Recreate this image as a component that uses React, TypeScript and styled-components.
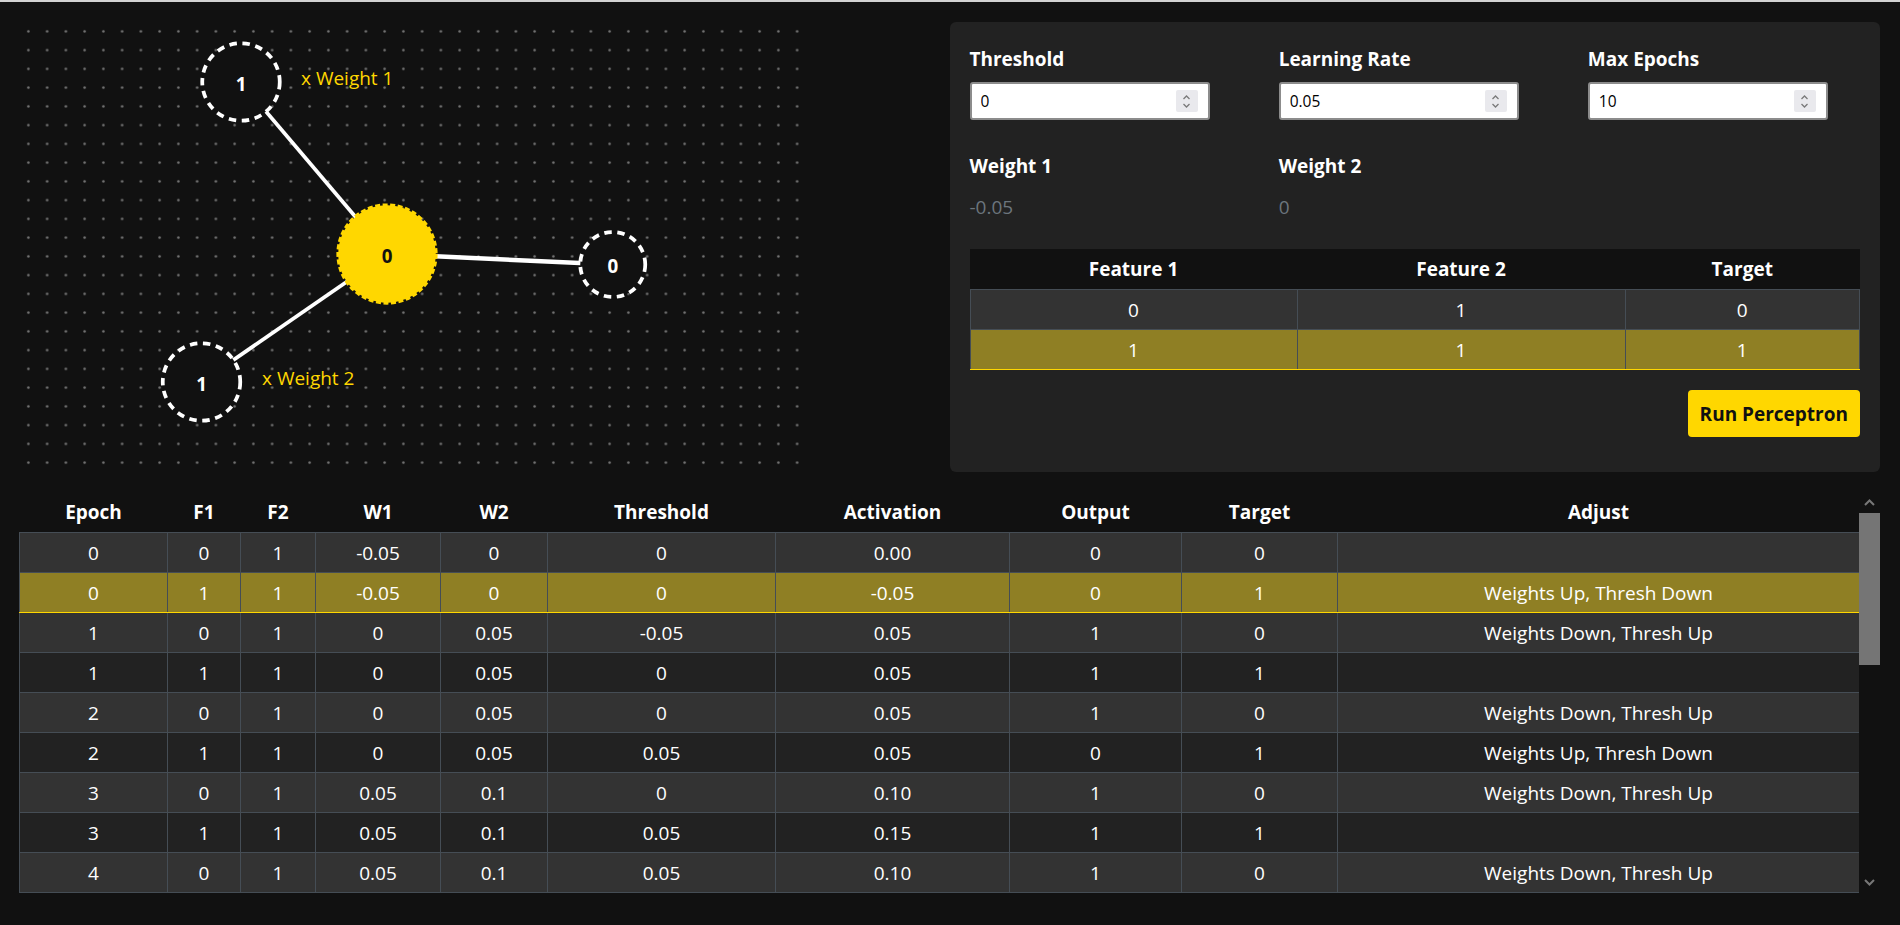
import React from "react";
import styled, { createGlobalStyle } from "styled-components";

const GlobalStyle = createGlobalStyle`
  html, body {
    margin: 0;
    padding: 0;
    background: #111;
  }
  body {
    border-top: 2px solid #d3d3d3;
    font-family: "Open Sans", "Noto Sans", sans-serif;
    color: #fff;
  }
`;

const Page = styled.div`
  padding: 20px 20px 0 19px;
`;

const TopSection = styled.section`
  display: grid;
  grid-template-columns: 1fr 1fr;
  height: 450px;
`;

const Canvas = styled.svg`
  display: block;
`;

const Panel = styled.div`
  background: #222;
  border-radius: 6px;
  padding: 24px 20px;
`;

const FieldGrid = styled.div`
  display: grid;
  grid-template-columns: repeat(3, 1fr);
  column-gap: 37px;
  row-gap: 33px;
`;

const Field = styled.div`
  display: flex;
  flex-direction: column;
`;

const Label = styled.label`
  font-weight: 700;
  font-size: 19px;
  line-height: 26px;
  margin-bottom: 10px;
`;

const InputBox = styled.div`
  width: 240px;
  height: 38px;
  box-sizing: border-box;
  border: 2px solid #8c8c8c;
  border-radius: 3px;
  background: #fff;
  display: flex;
  align-items: center;
  padding: 0 10px 0 9px;
`;

const NumberInput = styled.input`
  flex: 1;
  min-width: 0;
  border: none;
  outline: none;
  background: transparent;
  padding: 0;
  font-family: "Open Sans", sans-serif;
  font-size: 15.5px;
  color: #000;
`;

const Spinner = styled.span`
  width: 22px;
  height: 22px;
  background: #e9e9ed;
  border-radius: 2px;
  display: flex;
  align-items: center;
  justify-content: center;
`;

const Value = styled.div`
  color: #6c757d;
  font-size: 19px;
  line-height: 26px;
  margin-top: 5px;
`;

const DataTable = styled.table<{ $top?: number }>`
  width: 100%;
  border-collapse: collapse;
  table-layout: fixed;
  margin-top: ${(p) => p.$top ?? 0}px;

  th {
    background: #111;
    height: 40px;
    padding: 0;
    font-size: 19px;
    font-weight: 700;
    text-align: center;
  }

  td {
    height: 39px;
    padding: 0;
    border: 1px solid #454d55;
    font-size: 19px;
    text-align: center;
  }
`;

const Row = styled.tr<{ $striped: boolean; $active: boolean }>`
  background: ${(p) => (p.$active ? "#8f7f24" : p.$striped ? "#333" : "#222")};
  td {
    border-bottom-color: ${(p) => (p.$active ? "#ffd700" : "#454d55")};
  }
`;

const ButtonRow = styled.div`
  display: flex;
  justify-content: flex-end;
  margin-top: 20px;
`;

const RunButton = styled.button`
  height: 47px;
  padding: 0 12px;
  border: none;
  border-radius: 4px;
  background: #ffd700;
  color: #111;
  font-family: "Open Sans", sans-serif;
  font-size: 19px;
  font-weight: 700;
  cursor: pointer;
`;

const TableArea = styled.div`
  display: flex;
  margin-top: 20px;
  height: 401px;
`;

const TableScroll = styled.div`
  flex: 1;
  overflow-y: auto;
  scrollbar-width: none;
  &::-webkit-scrollbar {
    display: none;
  }
`;

const ScrollTrack = styled.div`
  width: 21px;
  display: flex;
  flex-direction: column;
  background: #111;
`;

const ScrollArrow = styled.div<{ $end?: boolean }>`
  height: 21px;
  display: flex;
  align-items: center;
  justify-content: center;
  margin-top: ${(p) => (p.$end ? "auto" : "0")};
`;

const ScrollThumb = styled.div`
  background: #757575;
`;

interface IStep {
  epoch: number;
  f1: number;
  f2: number;
  w1: number;
  w2: number;
  th: number;
  act: number;
  out: number;
  target: number;
  adjust: string;
}

const dataset = [
  { f1: 0, f2: 1, target: 0 },
  { f1: 1, f2: 1, target: 1 },
];

const fmt = (v: number) => {
  const r = Math.round(v * 100) / 100;
  return Object.is(r, -0) ? "0" : String(r);
};

function simulate(): IStep[] {
  const lr = 0.05;
  let w1 = -0.05;
  let w2 = 0;
  let th = 0;
  const steps: IStep[] = [];
  for (let epoch = 0; epoch <= 10; epoch++) {
    for (const d of dataset) {
      const act = d.f1 * w1 + d.f2 * w2;
      const out = act > th ? 1 : 0;
      let adjust = "";
      const step = { epoch, ...d, w1, w2, th, act, out };
      if (out < d.target) {
        adjust = "Weights Up, Thresh Down";
        w1 += lr * d.f1;
        w2 += lr * d.f1;
        th -= lr;
      } else if (out > d.target) {
        adjust = "Weights Down, Thresh Up";
        w1 -= lr * d.f1;
        w2 -= lr * d.f1;
        th += lr;
      }
      steps.push({ ...step, adjust });
    }
  }
  return steps;
}

const steps = simulate();
const current = 1;

const nodes = {
  in1: { x: 177.6, y: 48, r: 31 },
  in2: { x: 146, y: 288, r: 31 },
  sum: { x: 294.4, y: 185.6, r: 39 },
  out: { x: 475, y: 194, r: 26 },
};

function SpinIcon() {
  return (
    <svg width="9" height="15" viewBox="0 0 9 15">
      <polyline points="1.5,5 4.5,2 7.5,5" fill="none" stroke="#7a7a7a" strokeWidth="1.3" />
      <polyline points="1.5,10 4.5,13 7.5,10" fill="none" stroke="#7a7a7a" strokeWidth="1.3" />
    </svg>
  );
}

function Chevron({ down }: { down?: boolean }) {
  return (
    <svg width="11" height="7" viewBox="0 0 11 7">
      <polyline
        points={down ? "1,1 5.5,5.5 10,1" : "1,6 5.5,1.5 10,6"}
        fill="none"
        stroke="#777"
        strokeWidth="2"
      />
    </svg>
  );
}

function Network() {
  const s = steps[current];
  const line = (a: { x: number; y: number }, b: { x: number; y: number }, w = 3) => (
    <line x1={a.x} y1={a.y} x2={b.x} y2={b.y} stroke="#fff" strokeWidth={w} />
  );
  const inputNode = (n: { x: number; y: number; r: number }, v: number) => (
    <g>
      <circle cx={n.x} cy={n.y} r={n.r} fill="#111" stroke="#fff" strokeWidth="3" strokeDasharray="6 4.5" />
      <text x={n.x} y={n.y + 1} textAnchor="middle" dominantBaseline="central" fill="#fff" fontSize="15" fontWeight="700">
        {v}
      </text>
    </g>
  );
  return (
    <Canvas width={787.5} height={450} viewBox="0 0 630 360">
      <defs>
        <pattern id="dots" width="15" height="15" patternUnits="userSpaceOnUse">
          <circle cx="7.5" cy="7.5" r="1" fill="#777" />
        </pattern>
      </defs>
      <rect width="630" height="360" fill="url(#dots)" />
      {line(nodes.in1, nodes.sum)}
      {line(nodes.in2, nodes.sum)}
      {line(nodes.sum, nodes.out, 3.6)}
      {inputNode(nodes.in1, s.f1)}
      {inputNode(nodes.in2, s.f2)}
      {inputNode(nodes.out, s.out)}
      <circle cx={nodes.sum.x} cy={nodes.sum.y} r={nodes.sum.r} fill="#ffd700" stroke="#ffd700" strokeWidth="3" strokeDasharray="4 2" />
      <text x={nodes.sum.x} y={nodes.sum.y + 1} textAnchor="middle" dominantBaseline="central" fill="#111" fontSize="15" fontWeight="700">
        {s.out}
      </text>
      <text x={225.6} y={45} dominantBaseline="central" fill="#ffd700" fontSize="15.2">
        x Weight 1
      </text>
      <text x={194.4} y={285} dominantBaseline="central" fill="#ffd700" fontSize="15.2">
        x Weight 2
      </text>
    </Canvas>
  );
}

function NumberField({ label, value }: { label: string; value: string }) {
  return (
    <Field>
      <Label>{label}</Label>
      <InputBox>
        <NumberInput defaultValue={value} />
        <Spinner>
          <SpinIcon />
        </Spinner>
      </InputBox>
    </Field>
  );
}

const columns = [
  ["Epoch", 148],
  ["F1", 73],
  ["F2", 75],
  ["W1", 125],
  ["W2", 107],
  ["Threshold", 228],
  ["Activation", 234],
  ["Output", 172],
  ["Target", 156],
  ["Adjust", 522],
] as const;

// visible height vs full content height -> thumb size
const viewHeight = 401;
const contentHeight = 40 + steps.length * 40;
const thumbHeight = Math.round((viewHeight - 42) * (viewHeight / contentHeight)) - 4;

export default function App() {
  return (
    <>
      <GlobalStyle />
      <Page>
        <TopSection>
          <div>
            <Network />
          </div>
          <Panel>
            <FieldGrid>
              <NumberField label="Threshold" value="0" />
              <NumberField label="Learning Rate" value="0.05" />
              <NumberField label="Max Epochs" value="10" />
              <Field>
                <Label>Weight 1</Label>
                <Value>-0.05</Value>
              </Field>
              <Field>
                <Label>Weight 2</Label>
                <Value>0</Value>
              </Field>
            </FieldGrid>
            <DataTable $top={29}>
              <colgroup>
                <col style={{ width: 327 }} />
                <col style={{ width: 328 }} />
                <col />
              </colgroup>
              <thead>
                <tr>
                  <th>Feature 1</th>
                  <th>Feature 2</th>
                  <th>Target</th>
                </tr>
              </thead>
              <tbody>
                {dataset.map((d, i) => (
                  <Row key={i} $striped={i % 2 === 0} $active={i === current % dataset.length}>
                    <td>{d.f1}</td>
                    <td>{d.f2}</td>
                    <td>{d.target}</td>
                  </Row>
                ))}
              </tbody>
            </DataTable>
            <ButtonRow>
              <RunButton>Run Perceptron</RunButton>
            </ButtonRow>
          </Panel>
        </TopSection>
        <TableArea>
          <TableScroll>
            <DataTable>
              <colgroup>
                {columns.map(([name, w]) => (
                  <col key={name} style={{ width: w }} />
                ))}
              </colgroup>
              <thead>
                <tr>
                  {columns.map(([name]) => (
                    <th key={name}>{name}</th>
                  ))}
                </tr>
              </thead>
              <tbody>
                {steps.map((s, i) => (
                  <Row key={i} $striped={i % 2 === 0} $active={i === current}>
                    <td>{s.epoch}</td>
                    <td>{s.f1}</td>
                    <td>{s.f2}</td>
                    <td>{fmt(s.w1)}</td>
                    <td>{fmt(s.w2)}</td>
                    <td>{fmt(s.th)}</td>
                    <td>{s.act.toFixed(2)}</td>
                    <td>{s.out}</td>
                    <td>{s.target}</td>
                    <td>{s.adjust}</td>
                  </Row>
                ))}
              </tbody>
            </DataTable>
          </TableScroll>
          <ScrollTrack>
            <ScrollArrow>
              <Chevron />
            </ScrollArrow>
            <ScrollThumb style={{ height: thumbHeight }} />
            <ScrollArrow $end>
              <Chevron down />
            </ScrollArrow>
          </ScrollTrack>
        </TableArea>
      </Page>
    </>
  );
}
